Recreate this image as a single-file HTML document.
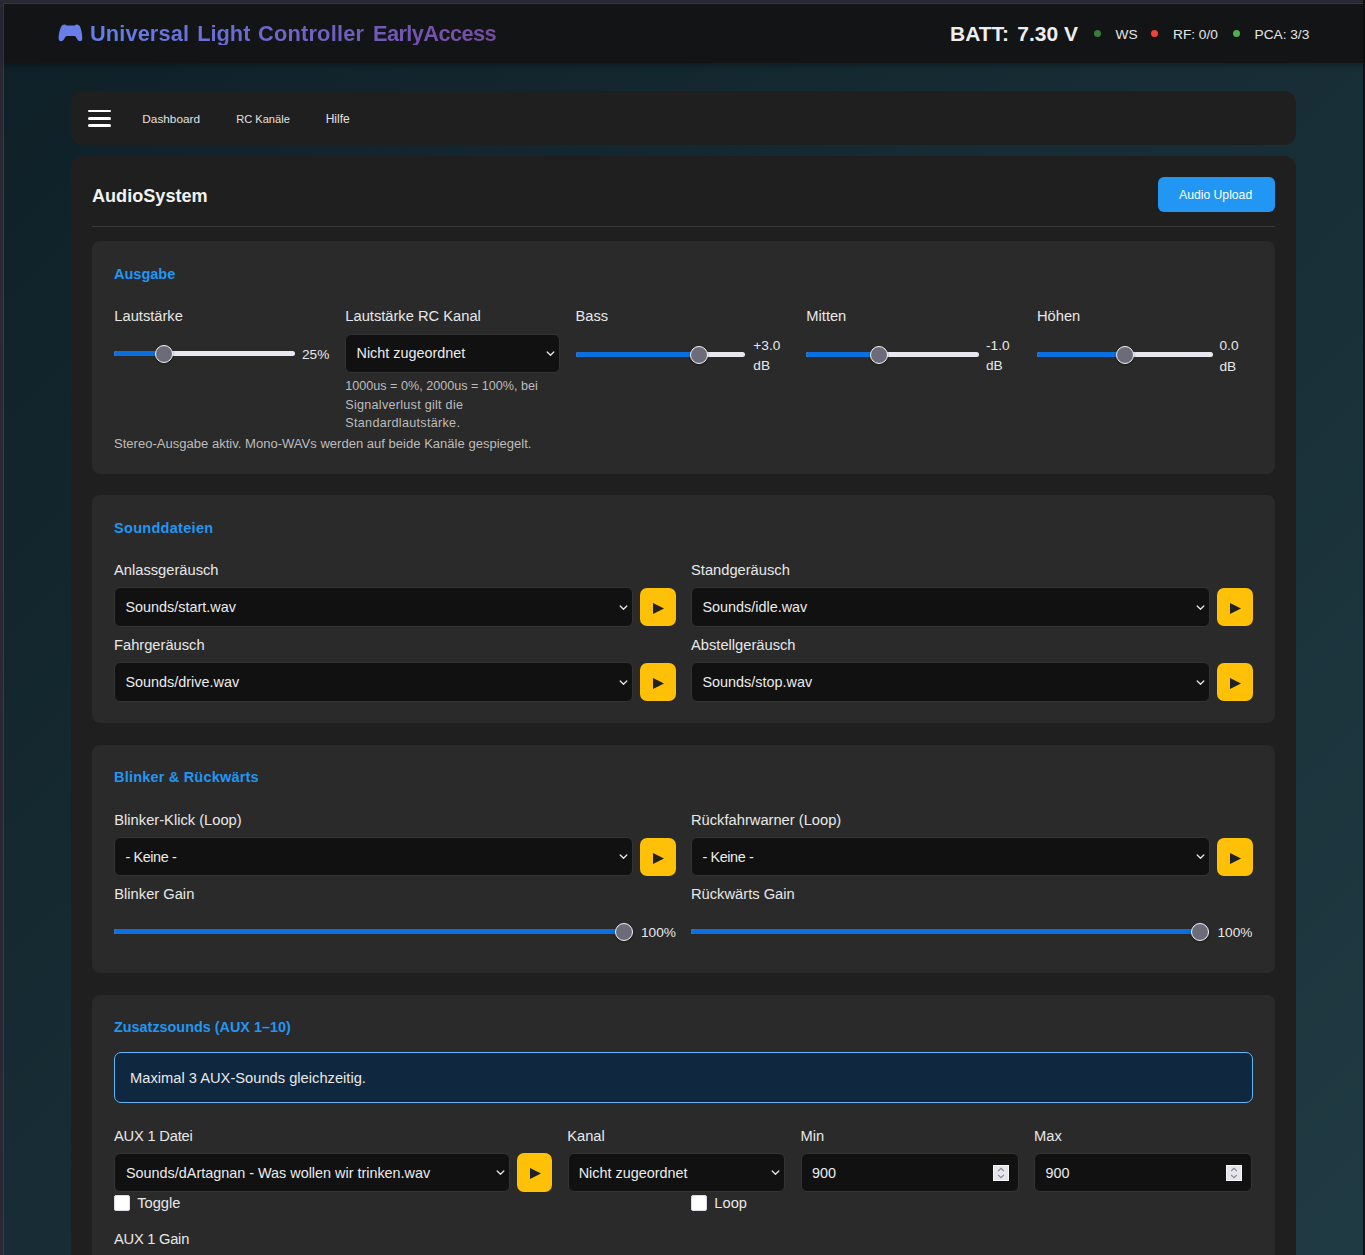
<!DOCTYPE html>
<html><head><meta charset="utf-8"><title>AudioSystem</title>
<style>
html,body{margin:0;padding:0;}
body{width:1365px;height:1255px;overflow:hidden;position:relative;background:#2a2833;font-family:"Liberation Sans", sans-serif;}
.b{position:absolute;}
.t{position:absolute;line-height:1;white-space:nowrap;}
</style></head><body>
<div class="b" style="left:3px;top:3px;width:1360px;height:1252px;background:#3c3b43"></div>
<div class="b" style="left:1363px;top:0;width:2px;height:1255px;background:#13110f"></div>
<div class="b" style="left:4px;top:4px;width:1359px;height:1251px;overflow:hidden">
<div class="b" style="left:0;top:0;width:1359px;height:3900px;background:linear-gradient(135deg,#0f2027 0%,#203a43 50%,#2c5364 100%)"></div>
</div>
<div class="b" style="left:4px;top:4px;width:1359px;height:59px;background:#131415;box-shadow:0 2px 6px rgba(0,0,0,.35)"></div>
<svg class="b" style="left:55px;top:20px" width="32" height="25" viewBox="0 0 32 25"><path d="M7.3 5.3 Q8.9 4.1 10.6 4.7 L11.6 5.6 L19.6 5.6 L20.6 4.7 Q22.3 4.1 23.9 5.3 C25.9 7.2 27.2 12.5 27.3 19 Q27.3 21.3 25 21.3 Q23.3 21.3 22.3 19.6 L20.6 16.6 Q20.1 15.9 19.1 15.9 L12.1 15.9 Q11.1 15.9 10.6 16.6 L8.9 19.6 Q7.9 21.3 6.1 21.3 Q3.6 21.3 3.6 19 C3.8 12.5 5.3 7.2 7.3 5.3 Z" fill="#6a7de8"/></svg>
<div class="t" style="left:90.00px;top:23.00px;font-size:21.8px;font-weight:700;color:transparent;letter-spacing:0.1px;background:linear-gradient(90deg,#667eea,#764ba2);background-size:410px 100%;background-position:0.0px 0;-webkit-background-clip:text;background-clip:text">Universal</div>
<div class="t" style="left:197.20px;top:23.00px;font-size:21.8px;font-weight:700;color:transparent;letter-spacing:0px;background:linear-gradient(90deg,#667eea,#764ba2);background-size:410px 100%;background-position:-107.2px 0;-webkit-background-clip:text;background-clip:text">Light</div>
<div class="t" style="left:258.00px;top:23.00px;font-size:21.8px;font-weight:700;color:transparent;letter-spacing:0.2px;background:linear-gradient(90deg,#667eea,#764ba2);background-size:410px 100%;background-position:-168.0px 0;-webkit-background-clip:text;background-clip:text">Controller</div>
<div class="t" style="left:373.00px;top:23.00px;font-size:21.8px;font-weight:700;color:transparent;letter-spacing:-0.6px;background:linear-gradient(90deg,#667eea,#764ba2);background-size:410px 100%;background-position:-283.0px 0;-webkit-background-clip:text;background-clip:text">EarlyAccess</div>
<div class="t" style="left:950.00px;top:23.00px;font-size:21px;font-weight:700;color:#eeeeee;">BATT:</div>
<div class="t" style="left:1017.30px;top:23.00px;font-size:21px;font-weight:700;color:#eeeeee;">7.30 V</div>
<div class="b" style="left:1093.9px;top:29.9px;width:7.2px;height:7.2px;border-radius:50%;background:#3a7d3a"></div>
<div class="t" style="left:1115.50px;top:28.00px;font-size:13.7px;font-weight:400;color:#e6e6e6;">WS</div>
<div class="b" style="left:1150.9px;top:30.0px;width:7.2px;height:7.2px;border-radius:50%;background:#f44336"></div>
<div class="t" style="left:1173.00px;top:28.00px;font-size:13.7px;font-weight:400;color:#e6e6e6;">RF: 0/0</div>
<div class="b" style="left:1232.9px;top:30.0px;width:7.2px;height:7.2px;border-radius:50%;background:#4caf50"></div>
<div class="t" style="left:1254.50px;top:28.00px;font-size:13.7px;font-weight:400;color:#e6e6e6;">PCA: 3/3</div>
<div class="b" style="left:71px;top:91px;width:1225px;height:54px;background:#1f1f1f;border-radius:12px"></div>
<div class="b" style="left:88px;top:110px;width:23px;height:2px;background:#fff;border-radius:1.5px"></div>
<div class="b" style="left:88px;top:117px;width:23px;height:3px;background:#fff;border-radius:1.5px"></div>
<div class="b" style="left:88px;top:124px;width:23px;height:3px;background:#fff;border-radius:1.5px"></div>
<div class="t" style="left:142.30px;top:114.00px;font-size:11.8px;font-weight:400;color:#e2e2e2;">Dashboard</div>
<div class="t" style="left:236.20px;top:114.00px;font-size:11.1px;font-weight:400;color:#e2e2e2;">RC Kanäle</div>
<div class="t" style="left:325.70px;top:113.00px;font-size:12px;font-weight:400;color:#e2e2e2;">Hilfe</div>
<div class="b" style="left:71px;top:156px;width:1225px;height:1200px;background:#1f1f1f;border-radius:12px"></div>
<div class="t" style="left:92.00px;top:187.00px;font-size:18.1px;font-weight:700;color:#f2f2f2;">AudioSystem</div>
<div class="b" style="left:1158px;top:177px;width:117px;height:35px;background:#2196f3;border-radius:6px"></div>
<div class="t" style="left:1179.00px;top:189.00px;font-size:12.2px;font-weight:400;color:#ffffff;">Audio Upload</div>
<div class="b" style="left:92px;top:226px;width:1183px;height:1px;background:#3a3a3a"></div>
<div class="b" style="left:92px;top:241px;width:1183px;height:233px;background:#2a2a2a;border-radius:8px"></div>
<div class="t" style="left:114.00px;top:267.00px;font-size:14.5px;font-weight:700;color:#2196f3;">Ausgabe</div>
<div class="t" style="left:114.30px;top:309.00px;font-size:14.7px;font-weight:400;color:#e8e8e8;">Lautstärke</div>
<div class="t" style="left:345.30px;top:309.00px;font-size:14.7px;font-weight:400;color:#e8e8e8;">Lautstärke RC Kanal</div>
<div class="t" style="left:575.50px;top:309.00px;font-size:14.7px;font-weight:400;color:#e8e8e8;">Bass</div>
<div class="t" style="left:806.30px;top:309.00px;font-size:14.7px;font-weight:400;color:#e8e8e8;">Mitten</div>
<div class="t" style="left:1037.00px;top:309.00px;font-size:14.7px;font-weight:400;color:#e8e8e8;">Höhen</div>
<div class="b" style="left:114px;top:351.3px;width:180.5px;height:4.6px;border-radius:3px;background:#e9e7ef"></div>
<div class="b" style="left:114px;top:351.3px;width:49.7px;height:4.6px;border-radius:3px 0 0 3px;background:#0c6fe0"></div>
<div class="b" style="left:154.7px;top:344.6px;width:18px;height:18px;border-radius:50%;background:#6b6b79;border:1.6px solid #f8f8f8;box-sizing:border-box;box-shadow:0 1px 2px rgba(0,0,0,.5)"></div>
<div class="t" style="left:302.00px;top:348.00px;font-size:13.7px;font-weight:400;color:#e8e8e8;">25%</div>
<div class="b" style="left:345px;top:334px;width:215px;height:39px;background:#111;border:1px solid #333;border-radius:6px;box-sizing:border-box"></div>
<div class="t" style="left:356.50px;top:346.00px;font-size:14.4px;font-weight:400;color:#ececec;">Nicht zugeordnet</div>
<div class="b" style="left:546.0px;top:351.0px;width:9px;height:6px;line-height:0"><svg width="9" height="6" viewBox="0 0 9 6"><path d="M1.2 1 L4.5 4.3 L7.8 1" fill="none" stroke="#e6e6e6" stroke-width="1.3" stroke-linecap="round" stroke-linejoin="round"/></svg></div>
<div class="t" style="left:345.30px;top:380.00px;font-size:12.6px;font-weight:400;color:#bdbdbd;letter-spacing:0px">1000us = 0%, 2000us = 100%, bei</div>
<div class="t" style="left:345.30px;top:399.00px;font-size:12.6px;font-weight:400;color:#bdbdbd;letter-spacing:0.27px">Signalverlust gilt die</div>
<div class="t" style="left:345.30px;top:417.00px;font-size:12.6px;font-weight:400;color:#bdbdbd;letter-spacing:0.3px">Standardlautstärke.</div>
<div class="b" style="left:575.5px;top:352.2px;width:169.7px;height:4.6px;border-radius:3px;background:#e9e7ef"></div>
<div class="b" style="left:575.5px;top:352.2px;width:123.5px;height:4.6px;border-radius:3px 0 0 3px;background:#0c6fe0"></div>
<div class="b" style="left:690.0px;top:345.5px;width:18px;height:18px;border-radius:50%;background:#6b6b79;border:1.6px solid #f8f8f8;box-sizing:border-box;box-shadow:0 1px 2px rgba(0,0,0,.5)"></div>
<div class="t" style="left:753.30px;top:339.00px;font-size:13.7px;font-weight:400;color:#e8e8e8;">+3.0</div>
<div class="t" style="left:753.30px;top:359.00px;font-size:13.7px;font-weight:400;color:#e8e8e8;">dB</div>
<div class="b" style="left:806px;top:352.2px;width:172.7px;height:4.6px;border-radius:3px;background:#e9e7ef"></div>
<div class="b" style="left:806px;top:352.2px;width:73.4px;height:4.6px;border-radius:3px 0 0 3px;background:#0c6fe0"></div>
<div class="b" style="left:870.4px;top:345.5px;width:18px;height:18px;border-radius:50%;background:#6b6b79;border:1.6px solid #f8f8f8;box-sizing:border-box;box-shadow:0 1px 2px rgba(0,0,0,.5)"></div>
<div class="t" style="left:986.00px;top:339.00px;font-size:13.7px;font-weight:400;color:#e8e8e8;">-1.0</div>
<div class="t" style="left:986.00px;top:359.00px;font-size:13.7px;font-weight:400;color:#e8e8e8;">dB</div>
<div class="b" style="left:1037.4px;top:352.3px;width:175.2px;height:4.6px;border-radius:3px;background:#e9e7ef"></div>
<div class="b" style="left:1037.4px;top:352.3px;width:87.6px;height:4.6px;border-radius:3px 0 0 3px;background:#0c6fe0"></div>
<div class="b" style="left:1116.0px;top:345.6px;width:18px;height:18px;border-radius:50%;background:#6b6b79;border:1.6px solid #f8f8f8;box-sizing:border-box;box-shadow:0 1px 2px rgba(0,0,0,.5)"></div>
<div class="t" style="left:1219.50px;top:339.00px;font-size:13.7px;font-weight:400;color:#e8e8e8;">0.0</div>
<div class="t" style="left:1219.50px;top:360.00px;font-size:13.7px;font-weight:400;color:#e8e8e8;">dB</div>
<div class="t" style="left:114.00px;top:437.00px;font-size:13.05px;font-weight:400;color:#bdbdbd;">Stereo-Ausgabe aktiv. Mono-WAVs werden auf beide Kanäle gespiegelt.</div>
<div class="b" style="left:92px;top:495px;width:1183px;height:228px;background:#2a2a2a;border-radius:8px"></div>
<div class="t" style="left:114.00px;top:521.00px;font-size:14.5px;font-weight:700;color:#2196f3;letter-spacing:0.3px">Sounddateien</div>
<div class="t" style="left:114.00px;top:563.00px;font-size:14.7px;font-weight:400;color:#e8e8e8;">Anlassgeräusch</div>
<div class="t" style="left:691.00px;top:563.00px;font-size:14.7px;font-weight:400;color:#e8e8e8;">Standgeräusch</div>
<div class="b" style="left:114px;top:587px;width:519px;height:40px;background:#111;border:1px solid #333;border-radius:6px;box-sizing:border-box"></div>
<div class="t" style="left:125.50px;top:600.00px;font-size:14.4px;font-weight:400;color:#ececec;">Sounds/start.wav</div>
<div class="b" style="left:619.0px;top:604.5px;width:9px;height:6px;line-height:0"><svg width="9" height="6" viewBox="0 0 9 6"><path d="M1.2 1 L4.5 4.3 L7.8 1" fill="none" stroke="#e6e6e6" stroke-width="1.3" stroke-linecap="round" stroke-linejoin="round"/></svg></div>
<div class="b" style="left:640px;top:588px;width:36px;height:38px;background:#ffc107;border-radius:7px"></div>
<svg class="b" style="left:653.0px;top:602.8px" width="11" height="11" viewBox="0 0 11 11"><path d="M0 0 L11 5.5 L0 11 Z" fill="#212121"/></svg>
<div class="b" style="left:691px;top:587px;width:519px;height:40px;background:#111;border:1px solid #333;border-radius:6px;box-sizing:border-box"></div>
<div class="t" style="left:702.50px;top:600.00px;font-size:14.4px;font-weight:400;color:#ececec;">Sounds/idle.wav</div>
<div class="b" style="left:1196.0px;top:604.5px;width:9px;height:6px;line-height:0"><svg width="9" height="6" viewBox="0 0 9 6"><path d="M1.2 1 L4.5 4.3 L7.8 1" fill="none" stroke="#e6e6e6" stroke-width="1.3" stroke-linecap="round" stroke-linejoin="round"/></svg></div>
<div class="b" style="left:1217px;top:588px;width:36px;height:38px;background:#ffc107;border-radius:7px"></div>
<svg class="b" style="left:1230.0px;top:602.8px" width="11" height="11" viewBox="0 0 11 11"><path d="M0 0 L11 5.5 L0 11 Z" fill="#212121"/></svg>
<div class="t" style="left:114.00px;top:638.00px;font-size:14.7px;font-weight:400;color:#e8e8e8;">Fahrgeräusch</div>
<div class="t" style="left:691.00px;top:638.00px;font-size:14.7px;font-weight:400;color:#e8e8e8;">Abstellgeräusch</div>
<div class="b" style="left:114px;top:662px;width:519px;height:40px;background:#111;border:1px solid #333;border-radius:6px;box-sizing:border-box"></div>
<div class="t" style="left:125.50px;top:675.00px;font-size:14.4px;font-weight:400;color:#ececec;">Sounds/drive.wav</div>
<div class="b" style="left:619.0px;top:679.5px;width:9px;height:6px;line-height:0"><svg width="9" height="6" viewBox="0 0 9 6"><path d="M1.2 1 L4.5 4.3 L7.8 1" fill="none" stroke="#e6e6e6" stroke-width="1.3" stroke-linecap="round" stroke-linejoin="round"/></svg></div>
<div class="b" style="left:640px;top:663px;width:36px;height:38px;background:#ffc107;border-radius:7px"></div>
<svg class="b" style="left:653.0px;top:677.8px" width="11" height="11" viewBox="0 0 11 11"><path d="M0 0 L11 5.5 L0 11 Z" fill="#212121"/></svg>
<div class="b" style="left:691px;top:662px;width:519px;height:40px;background:#111;border:1px solid #333;border-radius:6px;box-sizing:border-box"></div>
<div class="t" style="left:702.50px;top:675.00px;font-size:14.4px;font-weight:400;color:#ececec;">Sounds/stop.wav</div>
<div class="b" style="left:1196.0px;top:679.5px;width:9px;height:6px;line-height:0"><svg width="9" height="6" viewBox="0 0 9 6"><path d="M1.2 1 L4.5 4.3 L7.8 1" fill="none" stroke="#e6e6e6" stroke-width="1.3" stroke-linecap="round" stroke-linejoin="round"/></svg></div>
<div class="b" style="left:1217px;top:663px;width:36px;height:38px;background:#ffc107;border-radius:7px"></div>
<svg class="b" style="left:1230.0px;top:677.8px" width="11" height="11" viewBox="0 0 11 11"><path d="M0 0 L11 5.5 L0 11 Z" fill="#212121"/></svg>
<div class="b" style="left:92px;top:745px;width:1183px;height:228px;background:#2a2a2a;border-radius:8px"></div>
<div class="t" style="left:114.00px;top:770.00px;font-size:14.5px;font-weight:700;color:#2196f3;letter-spacing:0.2px">Blinker &amp; Rückwärts</div>
<div class="t" style="left:114.30px;top:813.00px;font-size:14.7px;font-weight:400;color:#e8e8e8;">Blinker-Klick (Loop)</div>
<div class="t" style="left:691.00px;top:813.00px;font-size:14.7px;font-weight:400;color:#e8e8e8;">Rückfahrwarner (Loop)</div>
<div class="b" style="left:114px;top:837px;width:519px;height:39px;background:#111;border:1px solid #333;border-radius:6px;box-sizing:border-box"></div>
<div class="t" style="left:125.50px;top:850.00px;font-size:14.4px;font-weight:400;color:#ececec;letter-spacing:-0.4px">- Keine -</div>
<div class="b" style="left:619.0px;top:854.0px;width:9px;height:6px;line-height:0"><svg width="9" height="6" viewBox="0 0 9 6"><path d="M1.2 1 L4.5 4.3 L7.8 1" fill="none" stroke="#e6e6e6" stroke-width="1.3" stroke-linecap="round" stroke-linejoin="round"/></svg></div>
<div class="b" style="left:640px;top:838px;width:36px;height:38px;background:#ffc107;border-radius:7px"></div>
<svg class="b" style="left:653.0px;top:852.8px" width="11" height="11" viewBox="0 0 11 11"><path d="M0 0 L11 5.5 L0 11 Z" fill="#212121"/></svg>
<div class="b" style="left:691px;top:837px;width:519px;height:39px;background:#111;border:1px solid #333;border-radius:6px;box-sizing:border-box"></div>
<div class="t" style="left:702.50px;top:850.00px;font-size:14.4px;font-weight:400;color:#ececec;letter-spacing:-0.4px">- Keine -</div>
<div class="b" style="left:1196.0px;top:854.0px;width:9px;height:6px;line-height:0"><svg width="9" height="6" viewBox="0 0 9 6"><path d="M1.2 1 L4.5 4.3 L7.8 1" fill="none" stroke="#e6e6e6" stroke-width="1.3" stroke-linecap="round" stroke-linejoin="round"/></svg></div>
<div class="b" style="left:1217px;top:838px;width:36px;height:38px;background:#ffc107;border-radius:7px"></div>
<svg class="b" style="left:1230.0px;top:852.8px" width="11" height="11" viewBox="0 0 11 11"><path d="M0 0 L11 5.5 L0 11 Z" fill="#212121"/></svg>
<div class="t" style="left:114.30px;top:887.00px;font-size:14.7px;font-weight:400;color:#e8e8e8;">Blinker Gain</div>
<div class="t" style="left:691.00px;top:887.00px;font-size:14.7px;font-weight:400;color:#e8e8e8;">Rückwärts Gain</div>
<div class="b" style="left:114px;top:929.3px;width:511.0px;height:4.6px;border-radius:3px;background:#e9e7ef"></div>
<div class="b" style="left:114px;top:929.3px;width:509.8px;height:4.6px;border-radius:3px 0 0 3px;background:#0c6fe0"></div>
<div class="b" style="left:614.8px;top:922.6px;width:18px;height:18px;border-radius:50%;background:#6b6b79;border:1.6px solid #f8f8f8;box-sizing:border-box;box-shadow:0 1px 2px rgba(0,0,0,.5)"></div>
<div class="t" style="left:641.00px;top:926.00px;font-size:13.7px;font-weight:400;color:#e8e8e8;">100%</div>
<div class="b" style="left:691px;top:929.3px;width:511.0px;height:4.6px;border-radius:3px;background:#e9e7ef"></div>
<div class="b" style="left:691px;top:929.3px;width:509.2px;height:4.6px;border-radius:3px 0 0 3px;background:#0c6fe0"></div>
<div class="b" style="left:1191.2px;top:922.6px;width:18px;height:18px;border-radius:50%;background:#6b6b79;border:1.6px solid #f8f8f8;box-sizing:border-box;box-shadow:0 1px 2px rgba(0,0,0,.5)"></div>
<div class="t" style="left:1217.50px;top:926.00px;font-size:13.7px;font-weight:400;color:#e8e8e8;">100%</div>
<div class="b" style="left:92px;top:995px;width:1183px;height:400px;background:#2a2a2a;border-radius:8px"></div>
<div class="t" style="left:114.00px;top:1020.00px;font-size:14.4px;font-weight:700;color:#2196f3;">Zusatzsounds (AUX 1–10)</div>
<div class="b" style="left:114px;top:1052px;width:1139px;height:51px;background:#0f2840;border:1px solid #64b5f6;border-radius:7px;box-sizing:border-box"></div>
<div class="t" style="left:130.00px;top:1071.00px;font-size:14.7px;font-weight:400;color:#e8e8e8;">Maximal 3 AUX-Sounds gleichzeitig.</div>
<div class="t" style="left:114.00px;top:1129.00px;font-size:14.7px;font-weight:400;color:#e8e8e8;letter-spacing:-0.2px">AUX 1 Datei</div>
<div class="t" style="left:567.20px;top:1129.00px;font-size:14.7px;font-weight:400;color:#e8e8e8;">Kanal</div>
<div class="t" style="left:800.50px;top:1129.00px;font-size:14.7px;font-weight:400;color:#e8e8e8;">Min</div>
<div class="t" style="left:1034.00px;top:1129.00px;font-size:14.7px;font-weight:400;color:#e8e8e8;">Max</div>
<div class="b" style="left:114px;top:1153px;width:396px;height:39px;background:#111;border:1px solid #333;border-radius:6px;box-sizing:border-box"></div>
<div class="t" style="left:126.00px;top:1166.00px;font-size:14.4px;font-weight:400;color:#ececec;">Sounds/dArtagnan - Was wollen wir trinken.wav</div>
<div class="b" style="left:496.0px;top:1170.0px;width:9px;height:6px;line-height:0"><svg width="9" height="6" viewBox="0 0 9 6"><path d="M1.2 1 L4.5 4.3 L7.8 1" fill="none" stroke="#e6e6e6" stroke-width="1.3" stroke-linecap="round" stroke-linejoin="round"/></svg></div>
<div class="b" style="left:517px;top:1153px;width:35px;height:39px;background:#ffc107;border-radius:7px"></div>
<svg class="b" style="left:529.5px;top:1168.3px" width="11" height="11" viewBox="0 0 11 11"><path d="M0 0 L11 5.5 L0 11 Z" fill="#212121"/></svg>
<div class="b" style="left:568px;top:1153px;width:217px;height:39px;background:#111;border:1px solid #333;border-radius:6px;box-sizing:border-box"></div>
<div class="t" style="left:578.70px;top:1166.00px;font-size:14.4px;font-weight:400;color:#ececec;">Nicht zugeordnet</div>
<div class="b" style="left:771.0px;top:1170.0px;width:9px;height:6px;line-height:0"><svg width="9" height="6" viewBox="0 0 9 6"><path d="M1.2 1 L4.5 4.3 L7.8 1" fill="none" stroke="#e6e6e6" stroke-width="1.3" stroke-linecap="round" stroke-linejoin="round"/></svg></div>
<div class="b" style="left:801px;top:1153px;width:218px;height:39px;background:#111;border:1px solid #333;border-radius:6px;box-sizing:border-box"></div>
<div class="t" style="left:812.00px;top:1166.00px;font-size:14.4px;font-weight:400;color:#ececec;">900</div>
<div class="b" style="left:993px;top:1165px;width:16px;height:16px;background:#e6e5ec;border:1px solid #f6f6fb;box-sizing:border-box"></div>
<svg class="b" style="left:993px;top:1165px" width="16" height="16" viewBox="0 0 16 16"><path d="M5.2 6 L8 3.3 L10.8 6 M5.2 10 L8 12.7 L10.8 10" fill="none" stroke="#8a8898" stroke-width="1.1"/></svg>
<div class="b" style="left:1034px;top:1153px;width:218px;height:39px;background:#111;border:1px solid #333;border-radius:6px;box-sizing:border-box"></div>
<div class="t" style="left:1045.50px;top:1166.00px;font-size:14.4px;font-weight:400;color:#ececec;">900</div>
<div class="b" style="left:1226px;top:1165px;width:16px;height:16px;background:#e6e5ec;border:1px solid #f6f6fb;box-sizing:border-box"></div>
<svg class="b" style="left:1226px;top:1165px" width="16" height="16" viewBox="0 0 16 16"><path d="M5.2 6 L8 3.3 L10.8 6 M5.2 10 L8 12.7 L10.8 10" fill="none" stroke="#8a8898" stroke-width="1.1"/></svg>
<div class="b" style="left:114px;top:1195px;width:16px;height:16px;background:#fff;border:1px solid #dcdae6;border-radius:2px;box-sizing:border-box"></div>
<div class="t" style="left:137.20px;top:1196.00px;font-size:14.7px;font-weight:400;color:#e8e8e8;">Toggle</div>
<div class="b" style="left:691px;top:1195px;width:16px;height:16px;background:#fff;border:1px solid #dcdae6;border-radius:2px;box-sizing:border-box"></div>
<div class="t" style="left:714.30px;top:1196.00px;font-size:14.7px;font-weight:400;color:#e8e8e8;">Loop</div>
<div class="t" style="left:114.00px;top:1232.00px;font-size:14.7px;font-weight:400;color:#e8e8e8;letter-spacing:-0.25px">AUX 1 Gain</div>
</body></html>
